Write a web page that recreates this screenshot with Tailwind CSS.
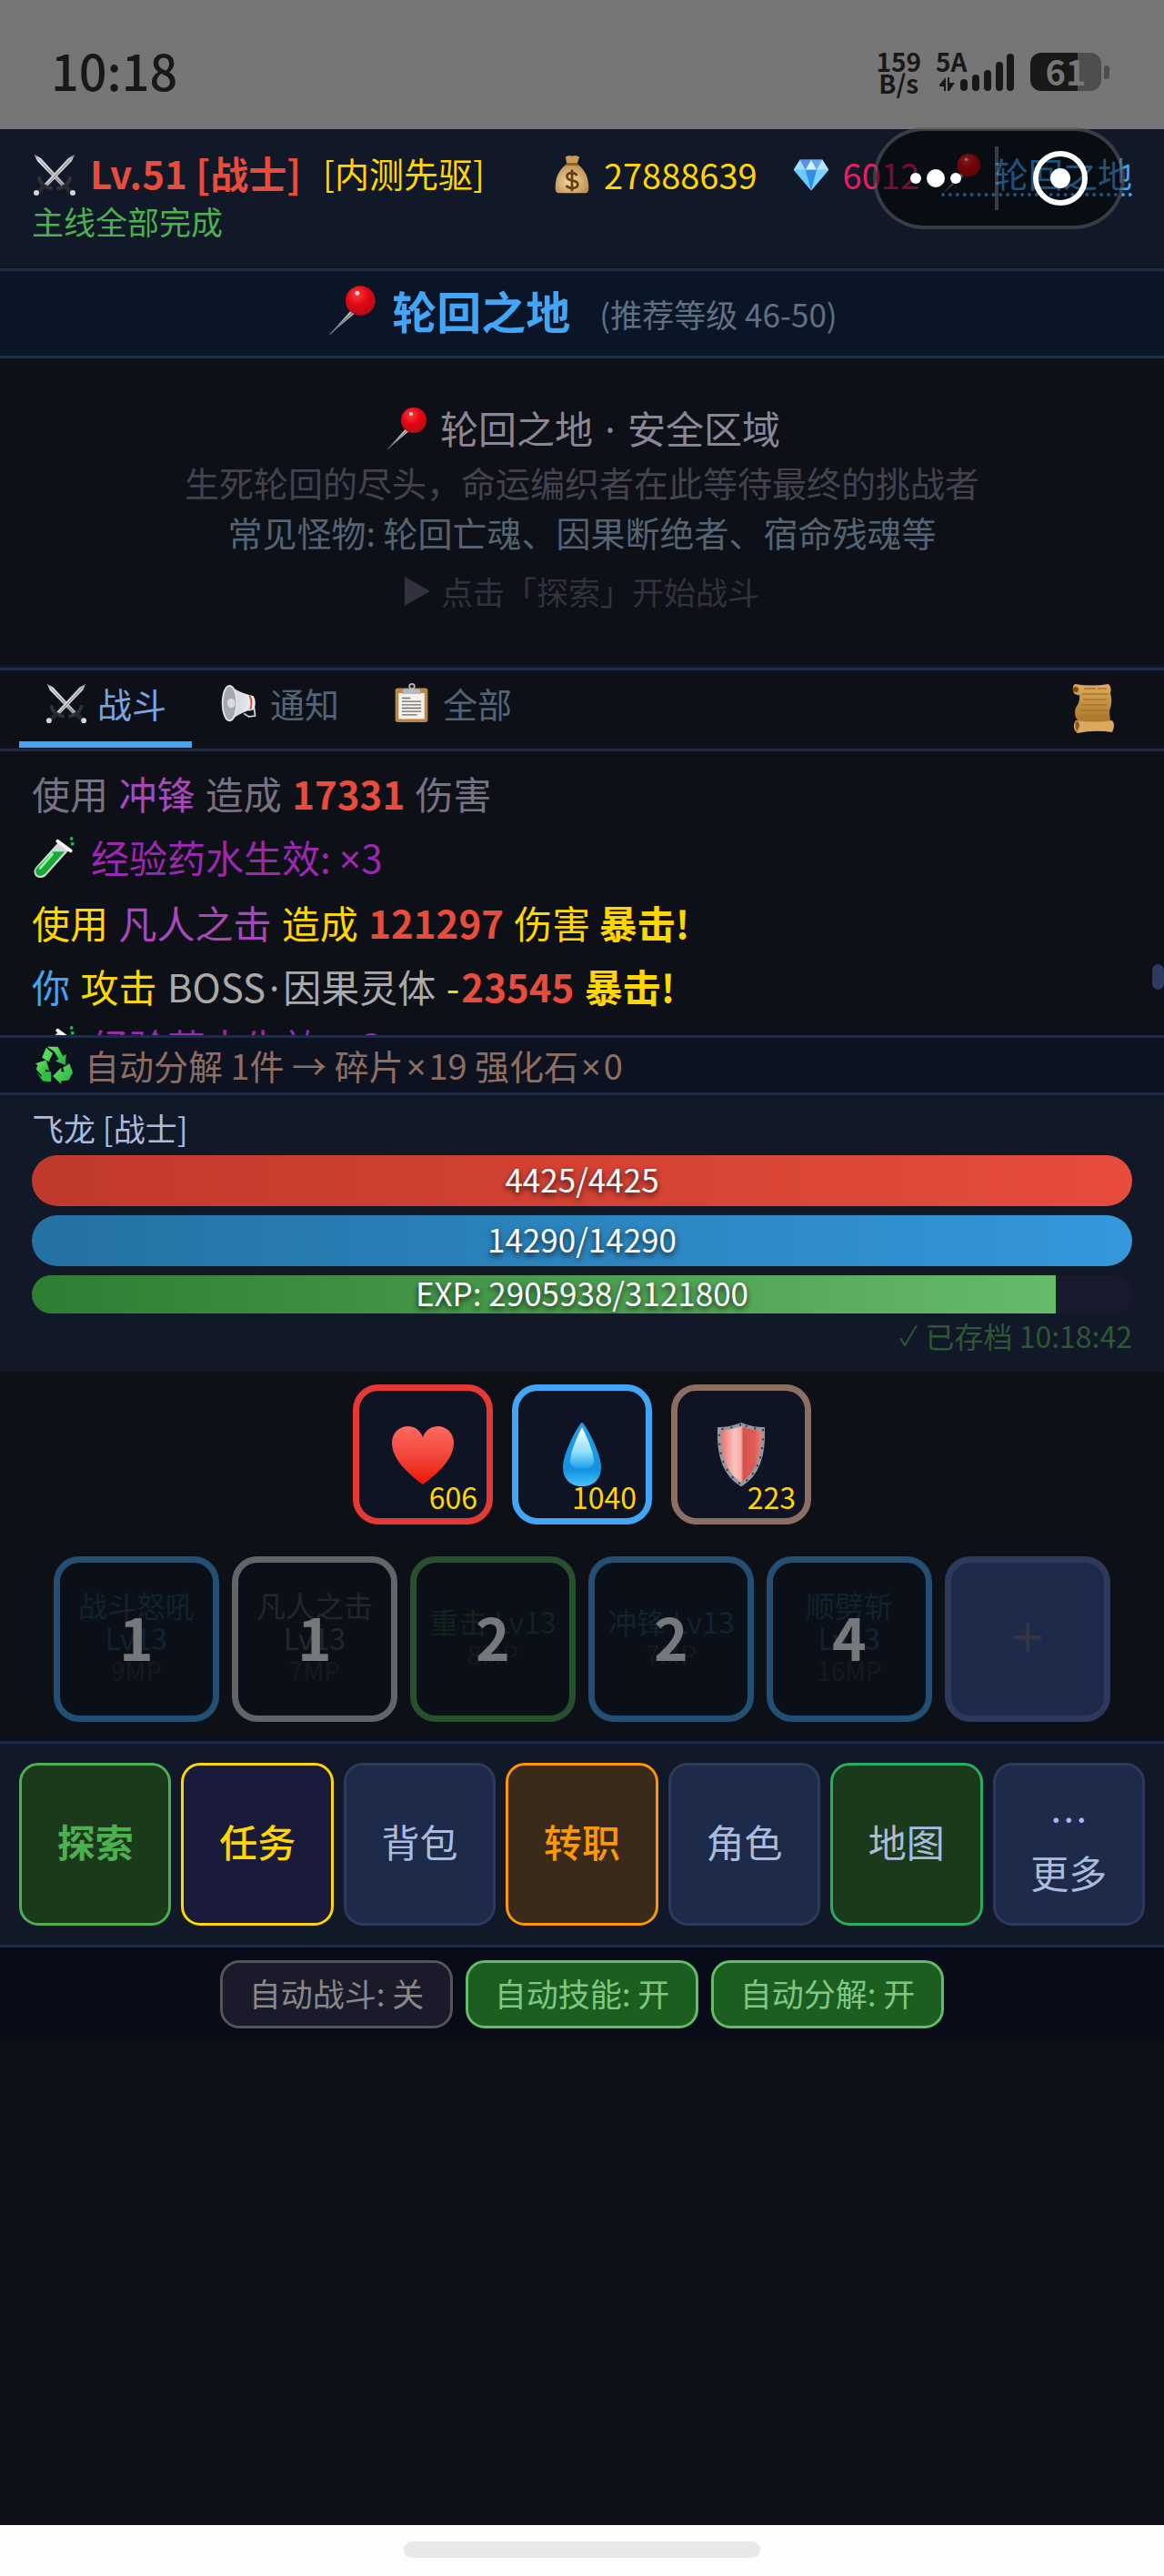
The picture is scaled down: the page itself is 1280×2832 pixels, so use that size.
<!DOCTYPE html>
<html lang="zh-CN">
<head>
    <meta charset="UTF-8">
    <meta name="viewport" content="width=device-width, initial-scale=1.0">
    <script src="https://cdn.jsdelivr.net/npm/@tailwindcss/browser@4"></script>
    <title>轮回之地</title>
</head>
<body class="relative min-h-screen flex flex-col bg-[#0d1117] font-['Noto_Sans_CJK_SC',sans-serif] text-[38px] leading-[48px]">

    <!-- shared icons -->
    <svg class="absolute size-0" aria-hidden="true">
        <defs>
            <linearGradient id="gBlade" x1="0" y1="0" x2="1" y2="1"><stop offset="0" stop-color="#f4f4f6"/><stop offset="1" stop-color="#9fa2a8"/></linearGradient>
            <radialGradient id="gPin" cx=".4" cy=".3" r=".8"><stop offset="0" stop-color="#ff3a3a"/><stop offset=".45" stop-color="#e30613"/><stop offset="1" stop-color="#a31018"/></radialGradient>
            <radialGradient id="gBag" cx=".45" cy=".6" r=".6"><stop offset="0" stop-color="#f5dcae"/><stop offset="1" stop-color="#bd8d4c"/></radialGradient>
            <linearGradient id="gHeart" x1="0" y1="0" x2="0" y2="1"><stop offset="0" stop-color="#ff6a60"/><stop offset=".55" stop-color="#f04438"/><stop offset="1" stop-color="#ee1408"/></linearGradient>
            <linearGradient id="gDrop" x1="0" y1="0" x2="0" y2="1"><stop offset="0" stop-color="#2a9be8"/><stop offset=".75" stop-color="#1493e0"/><stop offset="1" stop-color="#45c4fa"/></linearGradient>
            <linearGradient id="gDropIn" x1="0" y1="0" x2="0" y2="1"><stop offset="0" stop-color="#ffffff"/><stop offset=".6" stop-color="#8fe0ff"/><stop offset="1" stop-color="#1f9fe8"/></linearGradient>
            <linearGradient id="gShield"><stop offset="0" stop-color="#e8645f"/><stop offset=".35" stop-color="#f9c4c0"/><stop offset=".5" stop-color="#f4a9a4"/><stop offset=".55" stop-color="#d9534d"/><stop offset=".8" stop-color="#dd5a54"/><stop offset="1" stop-color="#f08a84"/></linearGradient>
            <linearGradient id="gScroll" x1="0" y1="0" x2="0" y2="1"><stop offset="0" stop-color="#e0ab5c"/><stop offset="1" stop-color="#a87529"/></linearGradient>
            <linearGradient id="gGreen" x1="0" y1="0" x2="1" y2="1"><stop offset="0" stop-color="#6ee66a"/><stop offset="1" stop-color="#1fae3a"/></linearGradient>
            <linearGradient id="gHorn"><stop offset="0" stop-color="#c9ccd4"/><stop offset="1" stop-color="#f4f4f6"/></linearGradient>
        </defs>
        <symbol id="swords" viewBox="0 0 48 48">
            <path d="M2 2 9 6 36 35 33 38 5 9Z" fill="url(#gBlade)"/>
            <path d="M3 3 34 37" stroke="#77797f" stroke-width="1"/>
            <path d="M46 2 39 6 12 35 15 38 43 9Z" fill="url(#gBlade)"/>
            <path d="M45 3 14 37" stroke="#77797f" stroke-width="1"/>
            <path d="M7 28Q9 37 20 39M41 28Q39 37 28 39" fill="none" stroke="#303236" stroke-width="4" stroke-linecap="round"/>
            <path d="M13 36 5 44M35 36 43 44" stroke="#26282b" stroke-width="5"/>
            <circle cx="4" cy="44" r="3" fill="#d5d6da"/><circle cx="44" cy="44" r="3" fill="#d5d6da"/>
        </symbol>
        <symbol id="pin" viewBox="0 0 48 48">
            <path d="M3 47 25 22 29 25Z" fill="#b9bcc2"/>
            <path d="M3 47 27 24" stroke="#6d7077" stroke-width="1"/>
            <ellipse cx="32" cy="15" rx="14" ry="14" fill="url(#gPin)"/>
            <circle cx="29" cy="8" r="2" fill="#fff" opacity=".85"/>
        </symbol>
        <symbol id="coins" viewBox="0 0 48 48">
            <path d="M16 3Q20 0 24 2Q29 0 33 3L30 11H18Z" fill="#c99a58"/>
            <path d="M18 11H30C38 17 44 25 44 40Q44 46 40 46H8Q4 46 4 40C4 25 10 17 18 11Z" fill="url(#gBag)"/>
            <path d="M17 10H31V13H17Z" fill="#8a5a2a"/>
            <path d="M30 25Q28 22 24 22Q18 22 18 26Q18 30 24 31Q31 32 31 36Q31 40 24 40Q19 40 17 37M24 18V44" fill="none" stroke="#6b3d12" stroke-width="3"/>
        </symbol>
        <symbol id="gem" viewBox="0 0 48 48">
            <path d="M10 5H38L46 18 24 44 2 18Z" fill="#45b4f5"/>
            <path d="M10 5 17 18H2Z" fill="#9fdcff"/><path d="M10 5H24L17 18Z" fill="#5b8fe8"/><path d="M24 5 31 18H17Z" fill="#d6f1ff"/><path d="M24 5H38L31 18Z" fill="#6aa6f0"/><path d="M38 5 46 18H31Z" fill="#b8e6ff"/>
            <path d="M2 18H17L24 44Z" fill="#6cc8ff"/><path d="M17 18H31L24 44Z" fill="#2f8fe6"/><path d="M31 18H46L24 44Z" fill="#7ad4ff"/>
        </symbol>
        <symbol id="horn" viewBox="0 0 48 48">
            <path d="M36 33 43 31 44 40 36 41 30 37" fill="none" stroke="#d9d9de" stroke-width="2"/>
            <path d="M12 2Q26 12 42 15Q46 22 43 31Q28 34 12 46Z" fill="url(#gHorn)"/>
            <path d="M37 14Q41 22 38 32" fill="none" stroke="#e0402f" stroke-width="2"/>
            <ellipse cx="12" cy="24" rx="9" ry="22" fill="#a3a8b5" stroke="#e6e7eb" stroke-width="2"/>
            <ellipse cx="14" cy="24" rx="5" ry="6" fill="#d7dbe4"/>
        </symbol>
        <symbol id="board" viewBox="0 0 48 48">
            <rect x="4" y="6" width="39" height="41" rx="3" fill="#bb8747"/>
            <path d="M8 12H39V43H8Z" fill="#f4f1ec"/>
            <path d="M14 7H33L35 13H12Z" fill="#b6b9be"/><circle cx="24" cy="4" r="3" fill="none" stroke="#b6b9be" stroke-width="2"/>
            <path d="M12 18H22M12 22H35M12 26H35M12 30H35M12 34H35M12 38H30" stroke="#6b6b6e" stroke-width="1.5"/>
        </symbol>
        <symbol id="scroll" viewBox="0 0 48 56">
            <path d="M3 2Q22 5 40 2Q44 6 42 12Q45 22 41 32L42 44H8Q1 38 4 28Q9 22 8 14Q2 15 1 9Q0 4 3 2Z" fill="url(#gScroll)"/>
            <path d="M13 7H26M28 7H38M11 13H40M12 19H38M10 25H38M9 31H40M8 37H38" stroke="#a87830" stroke-width="1.5"/>
            <circle cx="4" cy="8" r="3" fill="#7a4d18"/>
            <path d="M4 42Q24 45 44 42Q48 47 44 55Q24 52 6 56Q1 53 2 46Z" fill="#dca85f"/>
            <path d="M5 54Q1 44 6 43Q10 46 6 53" fill="#8a5a22"/>
        </symbol>
        <symbol id="tube" viewBox="0 0 48 48">
            <path d="M30 5 42 14 14 45Q8 49 3 45Q-1 40 3 35Z" fill="#cfd8d6"/>
            <path d="M23 17H36L14 42Q8 47 4 43Q1 39 5 35Z" fill="#18a836"/>
            <path d="M22 20 8 36" stroke="#8cf09a" stroke-width="3" stroke-linecap="round"/>
            <path d="M28 5 43 16" stroke="#f3f6f5" stroke-width="4" stroke-linecap="round"/>
            <circle cx="44" cy="2" r="2" fill="#28b548"/><circle cx="45" cy="8" r="2" fill="#28b548"/>
        </symbol>
        <symbol id="recycle" viewBox="0 0 48 48">
            <path d="M16 2H29L35 13 39 11 38 24 26 19 30 17 25 8Z" fill="url(#gGreen)"/>
            <path d="M15 3 23 10 18 20 10 15Z" fill="#56d857"/>
            <path d="M2 22 15 18 19 31 15 29 11 38 3 29 5 24Z" fill="url(#gGreen)"/>
            <path d="M3 32 11 43 21 44V32H12L9 38Z" fill="#2fbf45"/>
            <path d="M23 37 33 27V32H37L35 27 43 22 47 33 42 42 33 43V47Z" fill="url(#gGreen)"/>
        </symbol>
    </svg>

    <!-- phone status bar -->
    <div class="h-[142px] shrink-0 bg-[#767676] text-[#181818] pl-14 pr-[60px] pt-4 flex justify-between items-center font-bold">
        <span class="pb-1 text-[54px] leading-[60px] font-medium">10:18</span>
        <div class="flex items-center gap-4">
            <div class="text-[28px] leading-[24px] text-center">159<br>B/s</div>
            <div class="relative w-[88px] h-[48px]">
                <span class="absolute left-0 top-0 text-[28px] leading-[24px]">5A</span>
                <svg class="w-[88px] h-[48px]" viewBox="0 0 88 48" fill="#181818">
                    <path d="M4 38 11 30V45H9V40H4ZM13 30H15V36H21L15 45H13Z"/>
                    <rect x="27" y="32" width="8" height="13" rx="4"/><rect x="40" y="27" width="8" height="18" rx="4"/><rect x="53" y="22" width="8" height="23" rx="4"/><rect x="66" y="13" width="8" height="32" rx="4"/><rect x="78" y="4" width="8" height="41" rx="4"/>
                </svg>
            </div>
            <div class="relative flex items-center gap-[3px]">
                <div class="w-[78px] h-[42px] rounded-xl bg-linear-to-r from-[#181818] from-67% to-[#4d4d4d] to-67% text-[#767676] text-[38px] leading-[40px] text-center">61</div>
                <div class="w-[6px] h-[15px] rounded bg-[#4d4d4d]"></div>
            </div>
        </div>
    </div>

    <header class="relative h-[156px] bg-[#111827] border-b-3 border-[#1e2a4a] px-[35px] pt-6">
        <div class="flex items-center">
            <svg class="w-[50px] h-[48px]"><use href="#swords"/></svg>
            <span class="ml-[14px] pb-1 text-[42px] font-bold text-[#e74c3c]">Lv.51 [战士]</span>
            <span class="ml-6 pb-1 text-[#ffd700]">[内测先驱]</span>
            <div class="ml-auto flex items-center gap-6">
                <span class="mr-3 flex items-center gap-3 text-[#ffd700]"><svg class="w-[46px] h-[44px]"><use href="#coins"/></svg>27888639</span>
                <span class="flex items-center gap-3 text-[#e91e63]"><svg class="w-[46px] h-[42px]"><use href="#gem"/></svg>6012</span>
                <a href="#map" class="flex items-center gap-3 text-[#42a5f5] border-b-4 border-dotted border-[#42a5f5] leading-[42px]"><svg class="w-[46px] h-[44px]"><use href="#pin"/></svg>轮回之地</a>
            </div>
        </div>
        <p class="mt-px text-[35px] text-[#4caf50]">主线全部完成</p>

        <!-- mini-program capsule -->
        <div class="absolute -top-[2px] right-[43px] w-[277px] h-[112px] rounded-full bg-black/50 border-4 border-white/20 flex items-center">
            <button aria-label="更多操作" class="w-[130px] flex items-center justify-center gap-[6px]">
                <i class="size-3 rounded-full bg-white"></i><i class="size-5 rounded-full bg-white"></i><i class="size-3 rounded-full bg-white"></i>
            </button>
            <i class="w-1 h-[70px] bg-white/20"></i>
            <button aria-label="关闭" class="flex-1 flex justify-center">
                <span class="size-[60px] rounded-full border-6 border-white flex items-center justify-center"><i class="size-[22px] rounded-full bg-white"></i></span>
            </button>
        </div>
    </header>

    <div id="map" class="h-[96px] pb-2 bg-[#0a1628] border-b-3 border-[#1e3050] flex items-center justify-center">
        <svg class="w-[56px] h-[56px]"><use href="#pin"/></svg>
        <h1 class="ml-4 text-[49px] font-bold text-[#42a5f5]">轮回之地</h1>
        <span class="ml-8 pt-2 text-[35px] text-[#607080]">(推荐等级 46-50)</span>
    </div>

    <section class="h-[340px] pt-[46px] text-center border-b-3 border-[#121824]">
        <h2 class="flex items-center justify-center gap-3 text-[42px] leading-[60px] text-[#8b8698]"><svg class="w-[50px] h-[48px]"><use href="#pin"/></svg><span>轮回之地 <span class="mx-1 font-['Noto_Sans']">·</span> 安全区域</span></h2>
        <p class="leading-[55px] text-[#45414f]">生死轮回的尽头，命运编织者在此等待最终的挑战者</p>
        <p class="leading-[55px] text-[#546474]">常见怪物: 轮回亡魂、因果断绝者、宿命残魂等</p>
        <p class="mt-3 flex items-center justify-center gap-3 text-[35px] leading-[52px] text-[#333040]"><svg class="w-[28px] h-[32px]" viewBox="0 0 28 32"><path d="M0 0 28 16 0 32Z" fill="#333040"/></svg>点击「探索」开始战斗</p>
    </section>

    <div class="h-[92px] border-y-3 border-[#1e2a4a] pl-[21px] pr-[53px] flex items-center justify-between">
        <nav class="flex text-[#546474]">
            <button class="h-[84px] px-7 pb-2 flex items-center gap-[10px] text-[#7ba4e0] border-b-7 border-[#42a5f5]"><svg class="w-[48px] h-[46px]"><use href="#swords"/></svg>战斗</button>
            <button class="h-[84px] px-7 pb-2 flex items-center gap-[10px] border-b-7 border-transparent"><svg class="w-[48px] h-[42px]"><use href="#horn"/></svg>通知</button>
            <button class="h-[84px] px-7 pb-2 flex items-center gap-[10px] border-b-7 border-transparent"><svg class="w-[48px] h-[44px]"><use href="#board"/></svg>全部</button>
        </nav>
        <button aria-label="日志" class="pb-1"><svg class="w-[48px] h-[56px]"><use href="#scroll"/></svg></button>
    </div>

    <!-- battle log -->
    <div class="relative h-[312px] overflow-hidden px-[35px] pt-[11px] text-[42px] leading-[70px] text-[#ffd700]">
        <p class="text-[#777284]">使用 <span class="mx-[2px] text-[#ab47bc]">冲锋</span> 造成 <b class="mx-[2px] text-[#e74c3c]">17331</b> 伤害</p>
        <p class="flex items-center gap-4 text-[#9c27b0]"><svg class="w-[49px] h-[46px] overflow-visible"><use href="#tube"/></svg><span>经验药水生效: <span class="font-['Noto_Sans']">×</span>3</span></p>
        <p>使用 <span class="mx-[2px] text-[#ab47bc]">凡人之击</span> 造成 <b class="mx-[2px] text-[#e74c3c]">121297</b> 伤害 <b>暴击!</b></p>
        <p><span class="text-[#42a5f5]">你</span> <span class="mx-[2px]">攻击</span> <span class="text-[#aaaaaa]">BOSS<span class="mx-1 font-['Noto_Sans']">·</span>因果灵体</span> <span class="mx-[2px]">-</span><b class="text-[#e74c3c]">23545</b> <b class="mx-[2px]">暴击!</b></p>
        <p class="flex items-center gap-4 leading-[58px] text-[#9c27b0]"><svg class="w-[49px] h-[46px] overflow-visible"><use href="#tube"/></svg><span>经验药水生效: <span class="font-['Noto_Sans']">×</span>3</span></p>
        <i class="absolute right-0 top-[234px] w-[13px] h-7 rounded-full bg-[#2e3a60]"></i>
    </div>

    <div class="h-[66px] bg-[#0d1220] border-y-3 border-[#1e2a4a] px-[35px] flex items-center gap-[10px] text-[#8d6e63]">
        <svg class="w-[48px] h-[44px]"><use href="#recycle"/></svg>
        <span>自动分解 1件 → 碎片<span class="mx-[3px] font-['Noto_Sans']">×</span>19 强化石<span class="mx-[3px] font-['Noto_Sans']">×</span>0</span>
    </div>

    <section class="h-[304px] bg-[#111827] px-[35px] pt-[11px] text-[35px]">
        <p class="leading-[50px] text-[#aabbdd]">飞龙 [战士]</p>
        <div class="mt-[5px] flex flex-col gap-[10px] text-white text-center text-shadow-[0_3px_6px_rgb(0_0_0/0.8)]">
            <div class="h-14 leading-[52px] rounded-full bg-linear-to-r from-[#c0392b] to-[#e74c3c]">4425/4425</div>
            <div class="h-14 leading-[52px] rounded-full bg-linear-to-r from-[#2471a3] to-[#3498db]">14290/14290</div>
            <div class="relative h-[42px] leading-[38px] rounded-full overflow-hidden bg-[#1a1a2e]">
                <div class="absolute inset-y-0 left-0 bg-linear-to-r from-[#2e7d32] to-[#66bb6a]" style="width: 93.08%"></div>
                <span class="relative">EXP: 2905938/3121800</span>
            </div>
        </div>
        <p class="flex items-center justify-end gap-2 text-[32px] text-[#2d5832]"><svg class="w-5 h-6" viewBox="0 0 20 24" fill="none" stroke="#2d5832" stroke-width="2"><path d="M1 15 6 23 19 1"/></svg>已存档 10:18:42</p>
    </section>

    <div class="pt-[14px] flex justify-center gap-[21px] text-[32px] leading-[32px] text-[#ffd700]">
        <button class="relative size-[154px] rounded-[28px] border-7 border-[#e53935] bg-[#0f1424]">
            <svg class="mx-auto w-[70px] h-[72px]" viewBox="0 0 70 72"><path d="M35 69C20 58 1 42 1 23C1 4 27-3 35 17C43-3 69 4 69 23C69 42 50 58 35 69Z" fill="url(#gHeart)"/></svg>
            <span class="absolute right-[10px] bottom-2">606</span>
        </button>
        <button class="relative size-[154px] rounded-[28px] border-7 border-[#42a5f5] bg-[#0f1424]">
            <svg class="mx-auto w-[70px] h-[72px]" viewBox="0 0 70 72"><path d="M35 1C38 1 56 34 56 50C56 64 47 71 35 71S14 64 14 50C14 34 32 1 35 1Z" fill="url(#gDrop)"/><path d="M35 6C38 12 48 32 48 44C48 54 22 54 22 44C22 32 32 12 35 6Z" fill="url(#gDropIn)"/></svg>
            <span class="absolute right-[10px] bottom-2">1040</span>
        </button>
        <button class="relative size-[154px] rounded-[28px] border-7 border-[#8d6e63] bg-[#0f1424]">
            <svg class="mx-auto w-[70px] h-[72px]" viewBox="0 0 70 72"><path d="M35 3Q22 8 11 8Q9 53 35 69Q61 53 59 8Q48 8 35 3Z" fill="url(#gShield)" stroke="#96989e" stroke-width="4"/><path d="M35 3Q22 8 11 8Q9 53 35 69Q61 53 59 8Q48 8 35 3Z" fill="none" stroke="#33343a" stroke-width="2" stroke-dasharray="2 8"/></svg>
            <span class="absolute right-[10px] bottom-2">223</span>
        </button>
    </div>

    <!-- skills on cooldown -->
    <div class="pt-[35px] pb-[21px] flex justify-center gap-[14px] text-[32px] leading-[36px]">
        <button class="relative size-[182px] pb-1 rounded-[28px] border-7 border-[#244f75] bg-[#0b1018] text-[#112230]">
            战斗怒吼<br>Lv13<span class="block text-[28px] text-[#161921]">9MP</span>
            <b class="absolute inset-0 pb-2 flex items-center justify-center text-[64px] text-[#77787c]">1</b>
        </button>
        <button class="relative size-[182px] pb-1 rounded-[28px] border-7 border-[#636468] bg-[#0b1018] text-[#24262b]">
            凡人之击<br>Lv13<span class="block text-[28px] text-[#161921]">7MP</span>
            <b class="absolute inset-0 pb-2 flex items-center justify-center text-[64px] text-[#77787c]">1</b>
        </button>
        <button class="relative size-[182px] pb-1 rounded-[28px] border-7 border-[#28502e] bg-[#0b1018] text-[#12231b]">
            重击 Lv13<span class="block text-[28px] text-[#161921]">8MP</span>
            <b class="absolute inset-0 pb-2 flex items-center justify-center text-[64px] text-[#77787c]">2</b>
        </button>
        <button class="relative size-[182px] pb-1 rounded-[28px] border-7 border-[#244f75] bg-[#0b1018] text-[#112230]">
            冲锋 Lv13<span class="block text-[28px] text-[#161921]">7MP</span>
            <b class="absolute inset-0 pb-2 flex items-center justify-center text-[64px] text-[#77787c]">2</b>
        </button>
        <button class="relative size-[182px] pb-1 rounded-[28px] border-7 border-[#244f75] bg-[#0b1018] text-[#112230]">
            顺劈斩<br>Lv13<span class="block text-[28px] text-[#161921]">16MP</span>
            <b class="absolute inset-0 pb-2 flex items-center justify-center text-[64px] text-[#77787c]">4</b>
        </button>
        <button class="size-[182px] pb-3 rounded-[28px] border-7 border-[#2d3a5c] bg-[#1e2a4a] text-[#353444] text-[64px]">+</button>
    </div>

    <nav class="bg-[#111827] border-y-3 border-[#1e2a4a] p-[21px] grid grid-cols-7 gap-[11px] text-[42px] leading-[59px] text-[#aabbdd]">
        <button class="h-[179px] pb-2 rounded-[21px] border-3 border-[#4caf50] bg-[#1b3a1b] text-[#4caf50] font-bold">探索</button>
        <button class="h-[179px] pb-2 rounded-[21px] border-3 border-[#ffd700] bg-[#1a1a3a] text-[#ffd700] font-medium">任务</button>
        <button class="h-[179px] pb-2 rounded-[21px] border-3 border-[#2d3a5c] bg-[#1e2a4a]">背包</button>
        <button class="h-[179px] pb-2 rounded-[21px] border-3 border-[#ff9800] bg-[#3a2a1a] text-[#ff9800] font-medium">转职</button>
        <button class="h-[179px] pb-2 rounded-[21px] border-3 border-[#2d3a5c] bg-[#1e2a4a]">角色</button>
        <button class="h-[179px] pb-2 rounded-[21px] border-3 border-[#27ae60] bg-[#1b3a1b]">地图</button>
        <button class="h-[179px] rounded-[21px] border-3 border-[#2d3a5c] bg-[#1e2a4a]">…<br>更多</button>
    </nav>

    <div class="h-[103px] pt-[14px] bg-[#080c18] flex justify-center gap-[14px] text-[35px]">
        <button class="h-[75px] w-[256px] pb-1 rounded-[21px] border-3 border-[#555555] bg-[#1a1a2a] text-[#888888]">自动战斗: 关</button>
        <button class="h-[75px] w-[256px] pb-1 rounded-[21px] border-3 border-[#66bb6a] bg-[#1b5e20] text-[#81c784]">自动技能: 开</button>
        <button class="h-[75px] w-[256px] pb-1 rounded-[21px] border-3 border-[#66bb6a] bg-[#1b5e20] text-[#81c784]">自动分解: 开</button>
    </div>

    <div class="mt-auto h-14 bg-[#fdfdfd] pt-[18px]">
        <div class="mx-auto w-[392px] h-[18px] rounded-full bg-[#e8e8e8]"></div>
    </div>
</body>
</html>
